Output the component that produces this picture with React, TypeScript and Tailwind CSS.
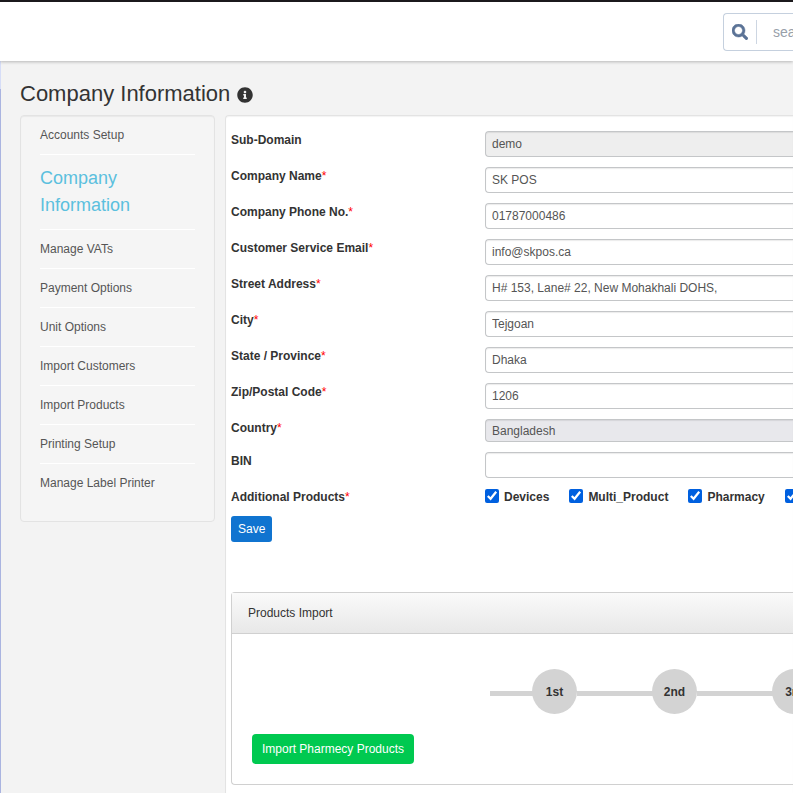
import { FaInfoCircle, FaSearch } from "react-icons/fa"

const menu = [
  "Accounts Setup",
  "Company Information",
  "Manage VATs",
  "Payment Options",
  "Unit Options",
  "Import Customers",
  "Import Products",
  "Printing Setup",
  "Manage Label Printer",
]

const fields = [
  { id: "sub-domain", label: "Sub-Domain", value: "demo", readOnly: true },
  { id: "name", label: "Company Name", value: "SK POS", required: true },
  { id: "phone", label: "Company Phone No.", value: "01787000486", required: true },
  { id: "email", label: "Customer Service Email", value: "info@skpos.ca", required: true },
  { id: "street", label: "Street Address", value: "H# 153, Lane# 22, New Mohakhali DOHS,", required: true },
  { id: "city", label: "City", value: "Tejgoan", required: true },
  { id: "state", label: "State / Province", value: "Dhaka", required: true },
  { id: "zip", label: "Zip/Postal Code", value: "1206", required: true },
  { id: "country", label: "Country", value: "Bangladesh", required: true, select: true },
  { id: "bin", label: "BIN", value: "" },
]

const products = ["Devices", "Multi_Product", "Pharmacy", "Services"]
const steps = ["1st", "2nd", "3rd"]

const control =
  "block w-full rounded-l border border-r-0 border-[#c4c6c8] px-[6px] text-xs leading-[18px] text-[#555] shadow-[inset_0_1px_1px_rgba(0,0,0,0.08)] outline-none"

function Star() {
  return <span className="font-normal text-[#f00]">*</span>
}

function Field({ id, label, value, required, readOnly, select }: any) {
  return (
    <div className="flex items-start">
      <label htmlFor={id} className="w-[254px] shrink-0 font-bold">
        {label}
        {required && <Star />}
      </label>
      {select ? (
        <select id={id} className={`${control} h-[23px] appearance-none bg-[#e8e8ec]`}>
          <option>{value}</option>
        </select>
      ) : (
        <input
          id={id}
          type="text"
          defaultValue={value}
          readOnly={readOnly}
          className={`${control} h-[26px] ${readOnly ? "bg-[#eee]" : "bg-white"}`}
        />
      )}
    </div>
  )
}

export default function App() {
  return (
    <div className="flex min-h-screen flex-col overflow-hidden bg-[#f3f3f3] font-['Liberation_Sans',Arial,sans-serif] text-xs leading-[18px] text-[#333]">
      {/* top bar */}
      <header className="relative flex justify-end border-t-2 border-[#1b191c] bg-white pt-[11px] pb-[10px] shadow-[0_1px_3px_rgba(0,0,0,0.25)]">
        <form className="flex h-[38px] w-[70px] items-center overflow-hidden rounded-l border border-r-0 border-[#c5d0de]">
          <label
            htmlFor="search"
            aria-label="search"
            className="flex h-6 w-[33px] shrink-0 items-center justify-center border-r border-[#cdd6e2]"
          >
            <FaSearch className="size-4 text-[#5b7396]" stroke="currentColor" strokeWidth={16} />
          </label>
          <input
            id="search"
            type="search"
            placeholder="search"
            className="ml-4 w-40 shrink-0 text-sm outline-none placeholder:text-[#98a0aa]"
          />
        </form>
      </header>

      <div className="flex grow">
        {/* edge of the collapsed navigation */}
        <div className="flex w-px shrink-0 flex-col bg-[#aab4e0]">
          <div className="h-7 bg-[#d6ddf7]" />
        </div>

        <main className="flex min-w-0 grow flex-col pl-[19px]">
          <h1 className="flex items-center gap-[7px] pt-[19px] pb-[7px] text-[22px] leading-7">
            Company Information
            <FaInfoCircle className="mt-0.5 size-4" />
          </h1>

          <div className="flex grow items-start gap-[10px]">
            <nav className="w-[195px] shrink-0 rounded border border-[#e3e3e3] bg-[#f5f5f5] px-[19px] pb-[19px] shadow-[inset_0_1px_1px_rgba(0,0,0,0.05)]">
              <ul className="divide-y divide-white">
                {menu.map((item) => (
                  <li key={item} className="py-[10px]">
                    {item === "Company Information" ? (
                      <a href="#" className="block text-lg leading-[27px] text-[#5bc0de]">
                        {item}
                      </a>
                    ) : (
                      <a href="#" className="block text-[#555]">
                        {item}
                      </a>
                    )}
                  </li>
                ))}
              </ul>
            </nav>

            <section className="min-w-0 grow self-stretch rounded-tl border-t border-l border-[#e3e3e3] bg-white pt-[15px] pl-[5px] shadow-[inset_0_1px_1px_rgba(0,0,0,0.05)]">
              <form className="flex flex-col gap-[10px]">
                {fields.map((field) => (
                  <Field key={field.id} {...field} />
                ))}
                <fieldset className="flex items-center font-bold">
                  <legend className="float-left w-[254px] shrink-0">
                    Additional Products
                    <Star />
                  </legend>
                  <div className="flex gap-5">
                    {products.map((product) => (
                      <label key={product} className="flex items-center gap-[5px]">
                        <input type="checkbox" defaultChecked className="mb-0.5 size-[14px] shrink-0 accent-[#0060df]" />
                        {product}
                      </label>
                    ))}
                  </div>
                </fieldset>
                <button type="button" className="h-[26px] self-start rounded-[3px] bg-[#1074d0] px-[7px] text-white">
                  Save
                </button>
              </form>

              {/* import wizard */}
              <div className="mt-[50px] rounded-l border border-r-0 border-[#d0d0d0]">
                <h2 className="border-b border-[#d0d0d0] bg-linear-to-b from-[#fafafa] to-[#e8e8e8] px-4 py-[11px]">
                  Products Import
                </h2>
                <div className="pt-[35px] pb-5 pl-5">
                  <ol className="ml-[238px] flex items-center font-bold">
                    {steps.map((step, i) => (
                      <li key={step} className="flex shrink-0 items-center">
                        <span className={`mt-1 h-[5px] bg-[#d3d3d3] ${i === 0 ? "w-[43px]" : "w-[76px]"}`} />
                        <span className="-ml-px flex size-[45px] items-center justify-center rounded-full bg-[#d3d3d3]">
                          {step}
                        </span>
                      </li>
                    ))}
                  </ol>
                  <button type="button" className="mt-5 h-[30px] rounded bg-[#00c950] px-[10px] text-white">
                    Import Pharmecy Products
                  </button>
                </div>
              </div>
            </section>
          </div>
        </main>
      </div>
    </div>
  )
}
